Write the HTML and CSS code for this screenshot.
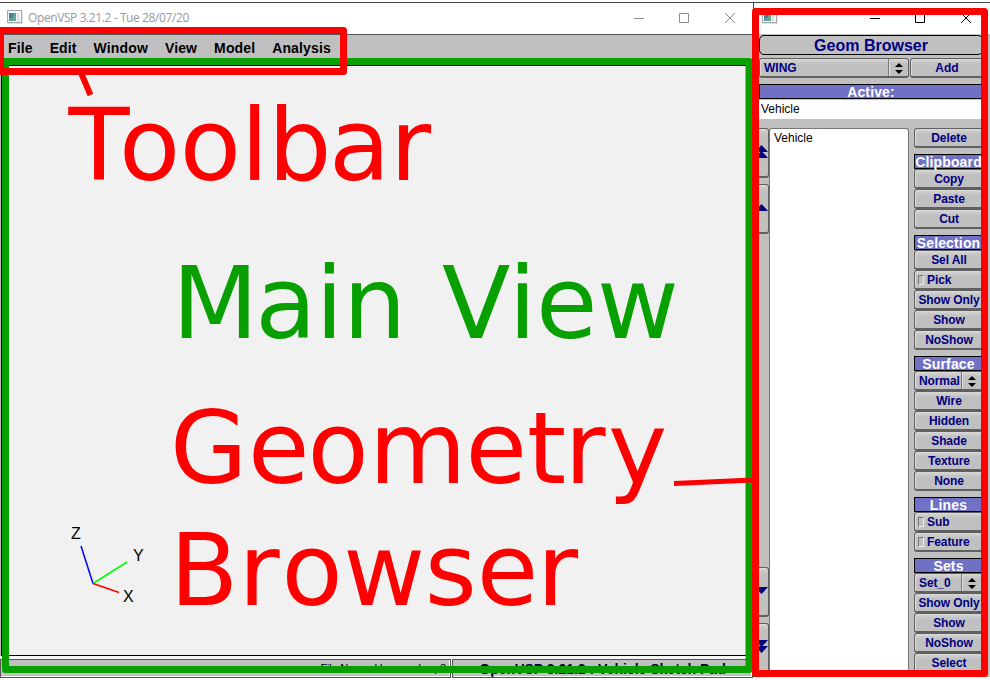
FILE: index.html
```html
<!DOCTYPE html>
<html lang="en">
<head>
<meta charset="utf-8">
<title>OpenVSP 3.21.2</title>
<link rel="stylesheet" href="styles.css">
</head>
<body>
<div class="desktop">
  <section class="window main">
    <header class="titlebar">
      <svg class="appicon" width="16" height="14" viewBox="0 0 16 14"><rect x=".5" y=".5" width="14" height="12" fill="#f5f5f5" stroke="#a3a9ae"/><rect x="2" y="3" width="7" height="8" fill="#5b9aa5"/><path d="M2 3h4v5H2z" fill="#477f9e"/><path d="M6 6h3v5H5z" fill="#67a98c"/><rect x="10" y="3" width="2" height="8" fill="#d8dde0"/><path d="M1 13.5h15V2" fill="none" stroke="#ddd"/></svg>
      <span class="caption">OpenVSP 3.21.2 - Tue 28/07/20</span>
      <svg class="controls" width="102" height="12" viewBox="0 0 102 12" fill="none" stroke="#8c8c8c"><path d="M0 5.5h10M45.500 .5h9v9h-9zM91 0l10 10M101 0L91 10"/></svg>
    </header>
    <nav class="menubar"><span>File</span><span>Edit</span><span>Window</span><span>View</span><span>Model</span><span>Analysis</span></nav>
    <main class="canvas"></main>
    <footer class="statusbar"><div class="file">File Name: Unnamed.vsp3</div><div class="pad">OpenVSP 3.21.2 : Vehicle Sketch Pad</div></footer>
  </section>

  <section class="window geom">
    <header class="titlebar">
      <svg class="appicon" width="16" height="14" viewBox="0 0 16 14"><rect x=".5" y=".5" width="14" height="12" fill="#f5f5f5" stroke="#a3a9ae"/><rect x="2" y="3" width="7" height="8" fill="#5b9aa5"/><path d="M2 3h4v5H2z" fill="#477f9e"/><path d="M6 6h3v5H5z" fill="#67a98c"/><rect x="10" y="3" width="2" height="8" fill="#d8dde0"/><path d="M1 13.500h15V2" fill="none" stroke="#ddd"/></svg>
      <svg class="controls" width="102" height="12" viewBox="0 0 102 12" fill="none" stroke="#000"><path d="M0 5.5h10M45.500 .5h9v9h-9zM91 0l10 10M101 0L91 10"/></svg>
    </header>
    <div class="heading">Geom Browser</div>
    <div class="addrow">
      <div class="btn choice"><span>WING</span><i><svg width="8" height="11" viewBox="0 0 8 11"><path d="M0 4l4-4 4 4zM0 7h8l-4 4z"/></svg></i></div>
      <div class="btn">Add</div>
    </div>
    <div class="label">Active:</div>
    <div class="field">Vehicle</div>
    <div class="work">
      <div class="movers">
        <div class="btn"><svg width="13" height="13" viewBox="0 0 13 13"><path d="M0 7l6.500-7 6.500 7zM0 13l6.500-7 6.500 7z"/></svg></div>
        <div class="btn"><svg width="13" height="7" viewBox="0 0 13 7"><path d="M0 7l6.500-7 6.500 7z"/></svg></div>
        <div class="btn lower"><svg width="13" height="7" viewBox="0 0 13 7"><path d="M0 0h13l-6.500 7z"/></svg></div>
        <div class="btn"><svg width="13" height="13" viewBox="0 0 13 13"><path d="M0 0h13l-6.500 7zM0 6h13l-6.500 7z"/></svg></div>
      </div>
      <div class="tree">Vehicle</div>
      <div class="tools">
        <div class="group"><div class="btn">Delete</div></div>
        <div class="group"><div class="label">Clipboard</div><div class="btn">Copy</div><div class="btn">Paste</div><div class="btn">Cut</div></div>
        <div class="group"><div class="label">Selection</div><div class="btn">Sel All</div><div class="btn check"><b></b>Pick</div><div class="btn">Show Only</div><div class="btn">Show</div><div class="btn">NoShow</div></div>
        <div class="group"><div class="label">Surface</div><div class="btn choice"><span>Normal</span><i><svg width="8" height="11" viewBox="0 0 8 11"><path d="M0 4l4-4 4 4zM0 7h8l-4 4z"/></svg></i></div><div class="btn">Wire</div><div class="btn">Hidden</div><div class="btn">Shade</div><div class="btn">Texture</div><div class="btn">None</div></div>
        <div class="group"><div class="label">Lines</div><div class="btn check"><b></b>Sub</div><div class="btn check"><b></b>Feature</div></div>
        <div class="group"><div class="label">Sets</div><div class="btn choice"><span>Set_0</span><i><svg width="8" height="11" viewBox="0 0 8 11"><path d="M0 4l4-4 4 4zM0 7h8l-4 4z"/></svg></i></div><div class="btn">Show Only</div><div class="btn">Show</div><div class="btn">NoShow</div><div class="btn">Select</div></div>
      </div>
    </div>
  </section>

  <svg class="annotations" width="990" height="680" viewBox="0 0 990 680">
    <g class="axes">
      <path d="M93 583.500L81 546" stroke="#00f"/><path d="M93 583.500L127 562" stroke="#0f0"/><path d="M93 583.500L119 592.500" stroke="#f00"/>
      <text x="71" y="539">Z</text><text x="133" y="561">Y</text><text x="123" y="602">X</text>
    </g>
    <rect class="green" x="5.500" y="61.500" width="743.500" height="608"/>
    <rect class="red" x=".5" y="30.500" width="343" height="41"/>
    <rect class="red" x="755.500" y="11.500" width="229" height="662"/>
    <path class="pointer" d="M81.500 74L90.500 95" stroke-width="6"/>
    <path class="pointer" d="M674 483.500L753 480" stroke-width="5"/>
    <g class="notes">
      <text x="68.400 119 179.700 240.700 268 329 390" y="180">Toolbar</text>
      <text class="view" x="172 255.300 315.500 343 406 442 508.500 536 597" y="338">Main View</text>
      <text x="170 248 307.500 369 465.500 527 564.600 608" y="483">Geometry</text>
      <text x="169.700 238.500 281.500 343.300 424.800 476.700 537" y="605">Browser</text>
    </g>
  </svg>
</div>
</body>
</html>
```
FILE: styles.css
```css
* { box-sizing: border-box; }
body { margin: 0; background: #fff; font: bold 12px "Liberation Sans", Arial, sans-serif; color: #000080; }
.desktop { position: relative; width: 990px; height: 680px; padding-top: 2px; display: flex; overflow: hidden; }
.window { height: 676px; border-top: 1px solid #444; background: #c0c0c0; display: flex; flex-direction: column; }
.main { width: 753px; }
.geom { width: 237px; height: 675px; border-left: 1px solid #444; padding-left: 5px; overflow: hidden; }
.titlebar { flex: none; height: 31px; background: #fff; display: flex; align-items: center; color: #999; }
.main .titlebar { padding: 0 17px 0 7px; }
.appicon { flex: none; margin-top: -3px; }
.controls { margin-left: auto; }
.caption { font: 12px "Open Sans", "Noto Sans", sans-serif; margin: -2px 0 0 5px; white-space: nowrap; letter-spacing: -.4px; }
.geom .titlebar { margin-left: -5px; padding: 0 18px 0 8px; }
.menubar { flex: none; height: 28px; border-top: 1px solid #555; padding: 5px 0 0 8px; display: flex; gap: 17px; font-size: 14px; line-height: 16px; letter-spacing: .13px; color: #000; }
.canvas { flex: none; height: 591px; margin: 3px 0 0 1px; border: solid #000; border-width: 1px 0 1px 1px; background: #f1f1f1; }
.statusbar { flex: none; border-top: 3px solid #f6f6f6; display: flex; gap: 1px; height: 22px; background: #fff; color: #000; overflow: hidden; }
.statusbar div { border: 1px solid #555; background: #c0c0c0; box-shadow: inset -1px -1px #fff; text-align: center; white-space: nowrap; }
.statusbar .file { width: 451px; padding: 2px 4px 0 0; text-align: right; font-weight: normal; font-size: 11px; line-height: 13px; letter-spacing: -.2px; }
.statusbar .pad { flex: 1; font-size: 14px; line-height: 19px; color: #000040; }
.heading { flex: none; margin-top: 1px; width: 224px; height: 20px; border: 1px solid #000; border-radius: 5px; text-align: center; font-size: 16px; line-height: 19px; }
.addrow { flex: none; display: flex; gap: 1px; margin-top: 3px; width: 225px; }
.addrow .btn { width: 74px; }
.addrow .choice { width: 150px; }
.btn { flex: none; height: 20px; border: 1px solid #606060; border-bottom-width: 2px; border-radius: 3px; background: linear-gradient(#dadada 0, #c8c8c8 3px, #c0c0c0 6px); box-shadow: inset 1px 0 #ddd; text-align: center; line-height: 19px; white-space: nowrap; }
.choice { display: flex; justify-content: space-between; text-align: left; padding-left: 4px; }
.choice i { width: 20px; height: 17px; padding-top: 1px; border-left: 1px solid #777; box-shadow: inset 1px 0 #e0e0e0; display: flex; align-items: center; justify-content: center; }
.tools .choice i { width: 22px; padding-right: 2px; }
.label { flex: none; height: 15px; border: 1px solid #000; background: #7070c4; color: #fff; text-align: center; font-size: 14px; line-height: 14px; letter-spacing: .15px; white-space: nowrap; }
.geom > .label { margin-top: 6px; width: 224px; }
.field { flex: none; margin-top: 1px; height: 19px; background: #fff; color: #000; font-weight: normal; line-height: 18px; padding-left: 2px; width: 226px; }
.work { display: flex; margin-top: 9px; height: 545px; }
.movers { width: 10px; display: flex; flex-direction: column; gap: 6px; overflow: hidden; align-items: flex-end; }
.movers .btn { width: 15px; height: 50px; padding-bottom: 2px; display: flex; align-items: center; justify-content: center; fill: #000080; }
.movers .lower { margin-top: auto; }
.tree { width: 140px; border: 1px solid #777; border-bottom: 0; border-radius: 3px 3px 0 0; background: #fff; color: #000; font-weight: normal; padding: 2px 0 0 4px; line-height: 14px; }
.tools { width: 70px; margin-left: 5px; display: flex; flex-direction: column; gap: 6px; }
.tools .btn { letter-spacing: -.1px; }
.tools .label { padding-right: 1px; }
.check { display: flex; align-items: center; padding-left: 3px; line-height: 18px; }
.check b { width: 6px; height: 10px; border: 1px solid #777; border-right-color: #eee; border-bottom-color: #eee; margin-right: 3px; }
.annotations { position: absolute; left: 0; top: 0; }
.axes path { stroke-width: 1.5; fill: none; }
.axes text { font: 16px "Liberation Sans", Arial, sans-serif; fill: #000; }
.green, .red { fill: none; stroke-width: 7; stroke: #07a000; stroke-linejoin: round; }
.red, .pointer { stroke: #f00; }
.notes text { font: 100px "DejaVu Sans", Verdana, sans-serif; fill: #f00; }
.notes .view { fill: #07a000; }
```
